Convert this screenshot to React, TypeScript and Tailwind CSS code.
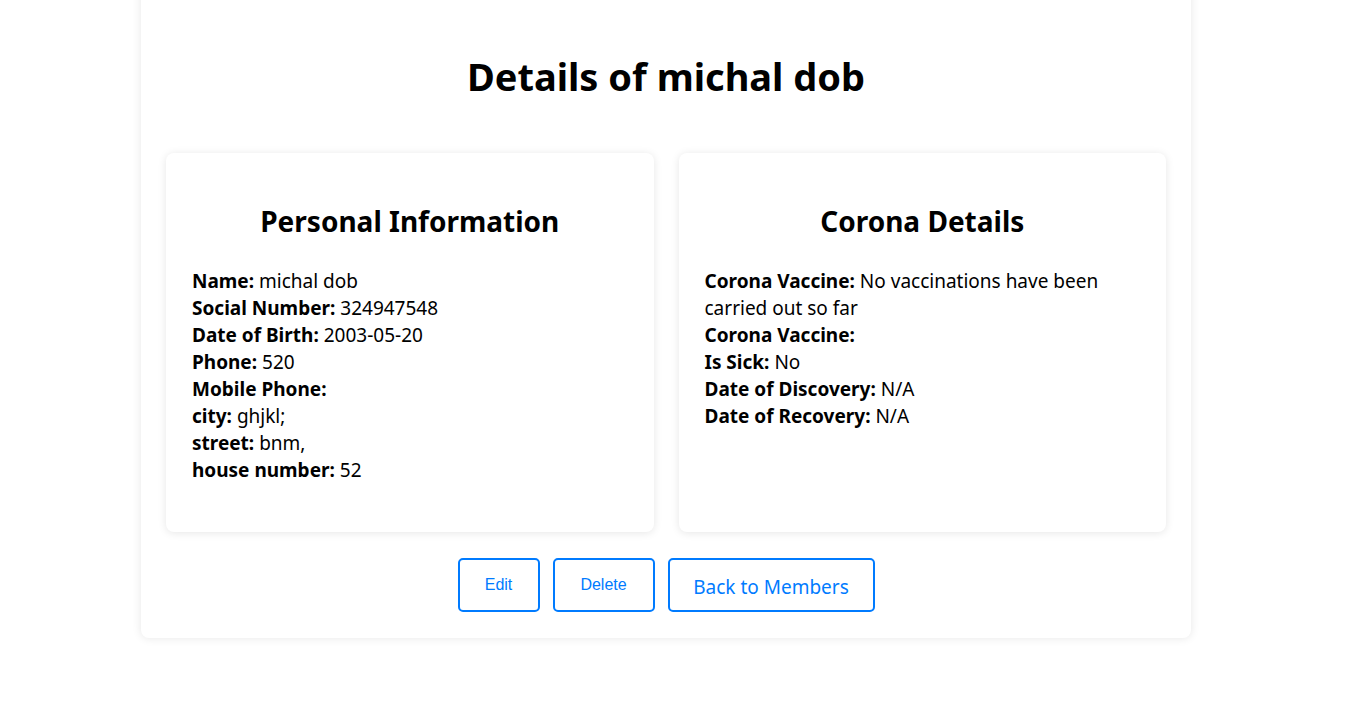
import React from "react"

type Row = { label: string; value?: string }

const personal: Row[] = [
  { label: "Name:", value: "michal dob" },
  { label: "Social Number:", value: "324947548" },
  { label: "Date of Birth:", value: "2003-05-20" },
  { label: "Phone:", value: "520" },
  { label: "Mobile Phone:" },
  { label: "city:", value: "ghjkl;" },
  { label: "street:", value: "bnm," },
  { label: "house number:", value: "52" },
]

const corona: Row[] = [
  { label: "Corona Vaccine:", value: "No vaccinations have been carried out so far" },
  { label: "Corona Vaccine:" },
  { label: "Is Sick:", value: "No" },
  { label: "Date of Discovery:", value: "N/A" },
  { label: "Date of Recovery:", value: "N/A" },
]

const InfoCard = ({ title, rows }: { title: string; rows: Row[] }) => {
  return (
    <div className="flex-1 bg-white rounded-lg shadow-[0_1px_8px_rgba(0,0,0,0.1)] px-[26px] pt-[50px] pb-[48px]">
      <h2 className="text-center text-[28px] leading-[36px] font-bold mb-[29px]">{title}</h2>
      <div className="text-[19px] leading-[27px]">
        {rows.map((r, i) => (
          <p key={i}>
            <strong className="font-bold">{r.label}</strong> {r.value}
          </p>
        ))}
      </div>
    </div>
  )
}

export default function App() {
  return (
    <div className="min-h-screen bg-white text-black font-['Noto_Sans',sans-serif] pr-[17px]">
      <div className="w-[1050px] mx-auto -mt-5 bg-white rounded-lg shadow-[0_0_10px_rgba(0,0,0,0.1)] px-[25px] pt-[72px] pb-[26px]">
        <h1 className="text-center text-[38px] leading-[48px] font-bold mb-[53px]">Details of michal dob</h1>
        <div className="flex gap-[25px]">
          <InfoCard title="Personal Information" rows={personal} />
          <InfoCard title="Corona Details" rows={corona} />
        </div>
        <div className="flex justify-center gap-[13px] mt-[26px]">
          <button className="w-[82px] h-[54px] border-2 border-[#007bff] rounded-[5px] text-[#007bff] text-[16px] font-['Liberation_Sans',sans-serif]">
            Edit
          </button>
          <button className="w-[102px] h-[54px] border-2 border-[#007bff] rounded-[5px] text-[#007bff] text-[16px] font-['Liberation_Sans',sans-serif]">
            Delete
          </button>
          <button className="w-[207px] h-[54px] border-2 border-[#007bff] rounded-[5px] text-[#007bff] text-[19px] pt-[4px]">
            Back to Members
          </button>
        </div>
      </div>
    </div>
  )
}
